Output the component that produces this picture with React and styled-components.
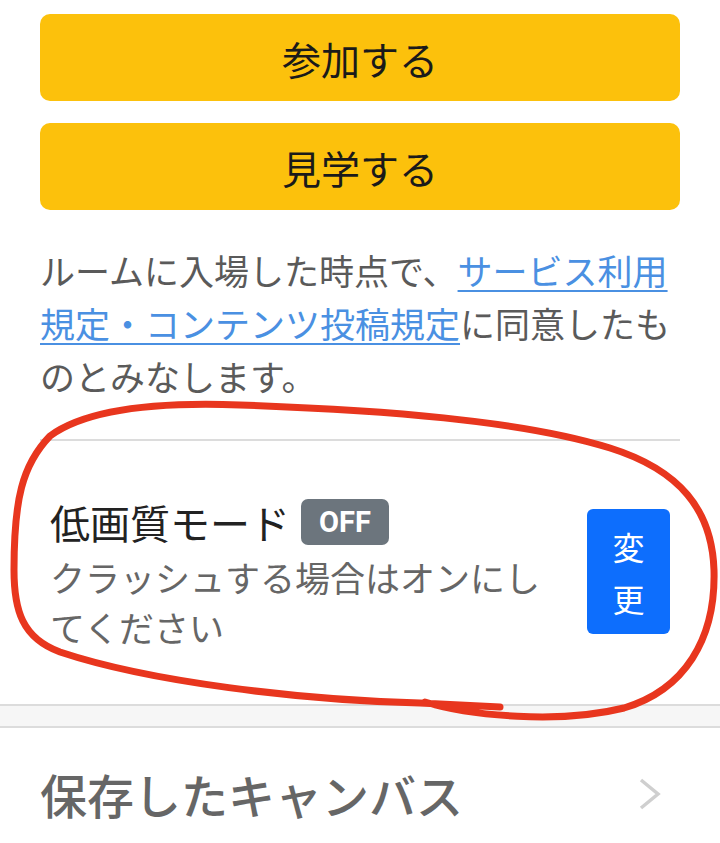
import React from "react";
import styled, { createGlobalStyle } from "styled-components";

const Global = createGlobalStyle`
  html, body { margin: 0; padding: 0; background: #fff; }
  body {
    font-family: "Noto Sans CJK JP", "Noto Sans", sans-serif;
    -webkit-font-smoothing: antialiased;
  }
`;

const Page = styled.div`
  position: relative;
  width: 720px;
  height: 843px;
  overflow: hidden;
  background: #fff;
`;

const Content = styled.div`
  padding: 14px 40px 0;
`;

const Actions = styled.div`
  display: flex;
  flex-direction: column;
  gap: 22px;
`;

const ActionButton = styled.button`
  display: flex;
  align-items: center;
  justify-content: center;
  height: 87px;
  border: none;
  border-radius: 10px;
  background: #fcc10c;
  color: #1a1a1a;
  font-family: "Noto Sans CJK JP", sans-serif;
  font-size: 39px;
  font-weight: 400;
  padding: 0;
`;

const Notice = styled.p`
  margin: 33px 0 0;
  font-size: 35px;
  line-height: 53px;
  color: #5a5a5a;
`;

const Link = styled.a`
  color: #4a90e2;
  text-decoration: underline;
  text-decoration-thickness: 2px;
  text-underline-offset: 5px;
`;

const Divider = styled.hr`
  margin: 37px 0 0;
  border: none;
  border-top: 2px solid #dcdcdc;
`;

const SettingRow = styled.div`
  display: flex;
  align-items: center;
  justify-content: space-between;
  gap: 30px;
  padding: 58px 10px 52px;
`;

const SettingText = styled.div`
  flex: 1;
  min-width: 0;
`;

const SettingTitle = styled.div`
  display: flex;
  align-items: center;
  gap: 11px;
  height: 46px;
  font-size: 40px;
  color: #222;
`;

const Badge = styled.span`
  display: inline-flex;
  align-items: center;
  justify-content: center;
  width: 88px;
  height: 46px;
  border-radius: 7px;
  background: #6c757d;
  color: #fff;
  font-family: Roboto, "Liberation Sans", sans-serif;
  font-weight: 700;
  font-size: 29px;
`;

const SettingDesc = styled.div`
  font-size: 35px;
  line-height: 50px;
  color: #666;
  margin-top: 7px;
`;

const ChangeButton = styled.button`
  display: flex;
  flex-direction: column;
  align-items: center;
  justify-content: center;
  width: 83px;
  height: 125px;
  margin-top: -8px;
  border: none;
  border-radius: 6px;
  background: #0d6efd;
  color: #fff;
  font-family: "Noto Sans CJK JP", sans-serif;
  font-size: 32px;
  line-height: 52px;
  padding: 0;
  flex-shrink: 0;
`;

const Band = styled.div`
  height: 20px;
  background: #f6f6f6;
  border-top: 2px solid #dcdcdc;
  border-bottom: 2px solid #dcdcdc;
`;

const ListItem = styled.div`
  display: flex;
  align-items: center;
  justify-content: space-between;
  padding: 31px 58px 40px 40px;
`;

const ListLabel = styled.span`
  font-size: 47px;
  line-height: 70px;
  font-weight: 500;
  color: #666;
`;

const Annotation = styled.svg`
  position: absolute;
  left: 0;
  top: 0;
  pointer-events: none;
`;

export default function App() {
  return (
    <Page>
      <Global />
      <Content>
        <Actions>
          <ActionButton>参加する</ActionButton>
          <ActionButton>見学する</ActionButton>
        </Actions>
        <Notice>
          ルームに入場した時点で、
          <Link>サービス利用規定・コンテンツ投稿規定</Link>
          に同意したものとみなします。
        </Notice>
        <Divider />
        <SettingRow>
          <SettingText>
            <SettingTitle>
              低画質モード<Badge>OFF</Badge>
            </SettingTitle>
            <SettingDesc>クラッシュする場合はオンにしてください</SettingDesc>
          </SettingText>
          <ChangeButton>
            <span>変</span>
            <span>更</span>
          </ChangeButton>
        </SettingRow>
      </Content>
      <Band />
      <ListItem>
        <ListLabel>保存したキャンバス</ListLabel>
        <svg width="24" height="34" viewBox="0 0 24 34">
          <path d="M3 3 L20 17 L3 31" fill="none" stroke="#cfcfcf" strokeWidth="3.5" strokeLinejoin="miter" />
        </svg>
      </ListItem>
      <Annotation width="720" height="843" viewBox="0 0 720 843">
        <path
          d="M500 707 L420 703 C300 700 150 682 60 652 C22 638 14 610 14 570 C14 500 22 465 50 436 C88 408 160 402 240 405 C380 410 520 420 610 448 C680 470 712 510 714 570 C716 640 684 690 624 708 C560 724 470 716 425 702"
          fill="none"
          stroke="#e8361e"
          strokeWidth="7"
          strokeLinecap="round"
          strokeLinejoin="round"
        />
      </Annotation>
    </Page>
  );
}
